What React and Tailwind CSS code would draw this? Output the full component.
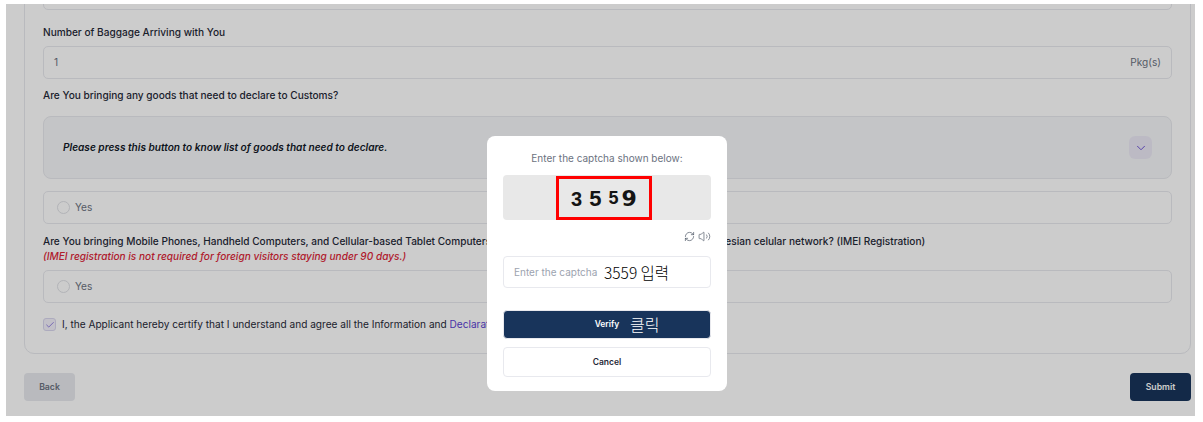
import { Check, ChevronDown, RefreshCw, Volume2 } from "lucide-react";

function Radio() {
  return (
    <div className="flex h-[33px] items-center gap-[5px] rounded-[5px] border border-[#e8e9ee] pl-[13px] text-[10.1px] font-normal text-[#6b7280]">
      <span className="h-[13px] w-[13px] rounded-full border border-[#dfe1e6]" />
      Yes
    </div>
  );
}

export default function App() {
  return (
    <div className="h-[422px] overflow-hidden bg-white pb-[6px] pl-[6px] pr-[8px] pt-[4px] font-['Inter',sans-serif]">
      <div className="relative h-[412px] overflow-hidden bg-white pl-[18px] pr-[4px]">
        <div className="-mt-[34px] rounded-[10px] border border-[#e8e9ee] px-[18px] pb-[21px] pt-[7px] text-[10.1px] font-medium text-[#1f2937]">
          <div className="h-[32px] rounded-[5px] border border-[#e8e9ee]" />
          <div className="mt-[14px] h-[16px] leading-[16px]">Number of Baggage Arriving with You</div>
          <div className="mt-[6px] flex h-[33px] items-center justify-between rounded-[5px] border border-[#e8e9ee] px-[10px] font-normal text-[#6b7280]">
            <span>1</span>
            <span>Pkg(s)</span>
          </div>
          <div className="mt-[8px] h-[16px] leading-[16px]">Are You bringing any goods that need to declare to Customs?</div>
          <div className="mt-[13px] flex h-[63px] items-center justify-between rounded-[8px] border border-[#e8e9ee] bg-[#f6f7f9] pl-[19px] pr-[19px]">
            <span className="font-semibold italic text-[#111827]">Please press this button to know list of goods that need to declare.</span>
            <span className="flex h-[23px] w-[23px] items-center justify-center rounded-[6px] bg-[#ece9f6] text-[#5b3fd1]">
              <ChevronDown size={14} strokeWidth={1.5} />
            </span>
          </div>
          <div className="mt-[12px]"><Radio /></div>
          <div className="mt-[9px] h-[16px] whitespace-nowrap leading-[16px]">
            Are You bringing Mobile Phones, Handheld Computers, and Cellular-based Tablet Computers that will be activated in Indonesia with the Indonesian celular network? (IMEI Registration)
          </div>
          <div className="h-[15px] font-medium italic leading-[15px] text-[#dc2638]">(IMEI registration is not required for foreign visitors staying under 90 days.)</div>
          <div className="mt-[6px]"><Radio /></div>
          <div className="mt-[14px] flex items-center gap-[6px] text-[#1f2937]">
            <span className="flex h-[13px] w-[13px] items-center justify-center rounded-[3px] border border-[#d9d6ee] bg-[#f3f1fb] text-[#5b3fd1]">
              <Check size={10} strokeWidth={1.5} />
            </span>
            <span className="font-normal">I, the Applicant hereby certify that I understand and agree all the Information and <span className="text-[#5b3fd1]">Declaration</span></span>
          </div>
        </div>
        <div className="mt-[19px] flex justify-between">
          <button className="h-[28px] w-[51px] rounded-[4px] bg-[#e8e9ee] text-[8.7px] font-semibold text-[#6b7280]">Back</button>
          <button className="h-[28px] w-[61px] rounded-[4px] bg-[#18345b] text-[8.7px] font-semibold text-white">Submit</button>
        </div>

        <div className="absolute inset-0 bg-black/20" />

        <div className="absolute left-[481px] top-[132px] flex h-[255px] w-[240px] flex-col rounded-[8px] bg-white px-[16px] pt-[16px]">
          <div className="text-center text-[10px] leading-[13px] text-[#6b7280]">Enter the captcha shown below:</div>
          <div className="relative mt-[10px] flex h-[45px] items-center justify-start rounded-[4px] bg-[#e8e8e8] pl-[68px] pt-[2px] font-['Liberation_Sans',sans-serif] font-bold text-[#141414]">
            <span className="text-[20px]">3</span>
            <span className="ml-[7px] text-[22px]">5</span>
            <span className="ml-[7px] text-[18px]">5</span>
            <span className="ml-[3px] font-['DejaVu_Sans',sans-serif] text-[22px]">9</span>
            <div className="absolute left-[53px] top-[1px] h-[44px] w-[96px] border-[3px] border-[#ff0000]" />
          </div>
          <div className="mt-[10px] flex items-center justify-end gap-[3px] text-[#4b5563]">
            <RefreshCw size={11} strokeWidth={1.5} />
            <Volume2 size={13} strokeWidth={1.25} />
          </div>
          <div className="relative mt-[13px] flex h-[32px] items-center rounded-[4px] border border-[#e8e9ee] pl-[10px] text-[10px] text-[#9ca3af]">
            Enter the captcha
            <span className="absolute left-[100px] top-[4px] font-['Noto_Sans_CJK_KR',sans-serif] text-[15.5px] font-light leading-[22px] text-black">3559 입력</span>
          </div>
          <button className="relative mt-[22px] h-[29px] rounded-[4px] border border-[#e8e9ee] bg-[#18345b] text-[8.5px] font-semibold text-white">
            Verify
            <span className="absolute left-[126px] top-[2px] font-['Noto_Sans_CJK_KR',sans-serif] text-[16px] font-light leading-[22px] text-white">클릭</span>
          </button>
          <button className="mt-[8px] h-[30px] rounded-[4px] border border-[#e8e9ee] bg-white text-[8.5px] font-semibold text-[#1f2937]">Cancel</button>
        </div>
      </div>
    </div>
  );
}
